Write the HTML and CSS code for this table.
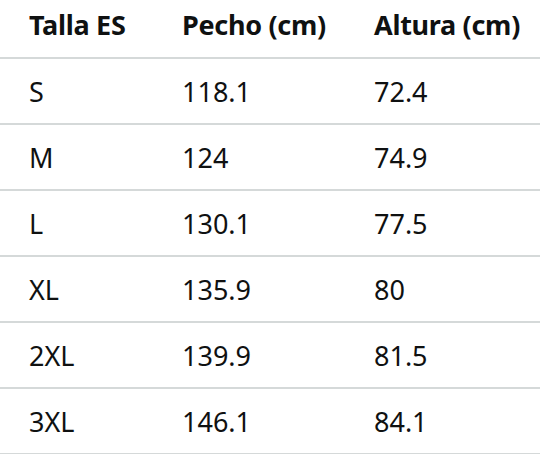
FILE: index.html
```html
<!DOCTYPE html>
<html lang="es">
<head>
    <meta charset="UTF-8">
    <meta name="viewport" content="width=device-width, initial-scale=1.0">
    <title>Tabla de tallas</title>
    <link rel="stylesheet" href="styles.css">
</head>
<body>
    <table class="size-table">
        <colgroup>
            <col class="col-size">
            <col class="col-chest">
            <col class="col-height">
        </colgroup>
        <thead>
            <tr>
                <th>Talla ES</th>
                <th>Pecho (cm)</th>
                <th>Altura (cm)</th>
            </tr>
        </thead>
        <tbody>
            <tr><td>S</td><td>118.1</td><td>72.4</td></tr>
            <tr><td>M</td><td>124</td><td>74.9</td></tr>
            <tr><td>L</td><td>130.1</td><td>77.5</td></tr>
            <tr><td>XL</td><td>135.9</td><td>80</td></tr>
            <tr><td>2XL</td><td>139.9</td><td>81.5</td></tr>
            <tr><td>3XL</td><td>146.1</td><td>84.1</td></tr>
        </tbody>
    </table>
</body>
</html>
```

FILE: styles.css
```css
* {
    margin: 0;
    padding: 0;
    box-sizing: border-box;
}

html, body {
    width: 100%;
    height: 100%;
    background-color: #fff;
    overflow: hidden;
}

body {
    font-family: "Noto Sans", "Open Sans", sans-serif;
    font-size: 27px;
    color: #0f1111;
}

.size-table {
    width: 540px;
    table-layout: fixed;
    border-collapse: collapse;
}

.col-size {
    width: 153px;
}

.col-chest {
    width: 192px;
}

.col-height {
    width: 195px;
}

.size-table th,
.size-table td {
    text-align: left;
    padding: 0 0 0 29px;
    border-bottom: 2px solid #d5d9d9;
    white-space: nowrap;
}

.size-table th {
    height: 58px;
    font-weight: 700;
    letter-spacing: -0.3px;
    padding-bottom: 8px;
}

.size-table td {
    height: 66px;
    font-weight: 400;
}
```
